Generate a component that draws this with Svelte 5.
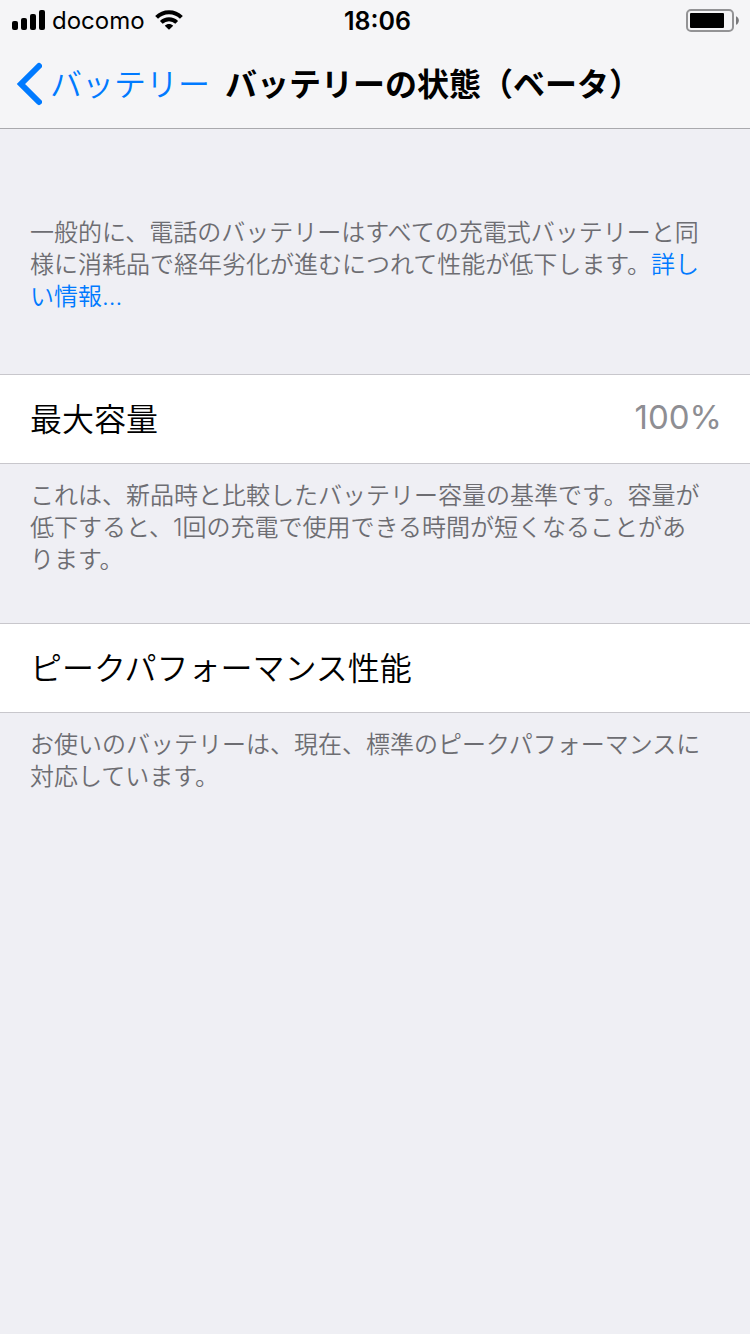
<script>
	let carrier = 'docomo';
	let time = '18:06';
	let charge = 34;

	let groups = [
		{
			label: '最大容量',
			value: '100%',
			note: 'これは、新品時と比較したバッテリー容量の基準です。容量が低下すると、1回の充電で使用できる時間が短くなることがあります。'
		},
		{
			label: 'ピークパフォーマンス性能',
			value: '',
			note: 'お使いのバッテリーは、現在、標準のピークパフォーマンスに対応しています。'
		}
	];
</script>

<header class="top">
	<div class="status">
		<div class="status__left">
			<svg width="33" height="20" viewBox="0 0 33 20" aria-hidden="true">
				<rect x="0" y="11" width="6" height="9" rx="2" />
				<rect x="9" y="8" width="6" height="12" rx="2" />
				<rect x="18" y="4" width="6" height="16" rx="2" />
				<rect x="27" y="0" width="6" height="20" rx="2" />
			</svg>
			<span class="carrier">{carrier}</span>
			<svg class="wifi" width="28" height="20" viewBox="0 0 28 20" aria-hidden="true">
				<path d="M1.6 7.4C8.5 0.4 19.5 0.4 26.4 7.4" />
				<path d="M6.3 12.4C10.6 8.3 17.4 8.3 21.7 12.4" />
				<path class="solid" d="M9.8 15.7C12 13.5 16 13.5 18.2 15.7L14.6 19.3Q14 19.9 13.4 19.3Z" />
			</svg>
		</div>
		<time>{time}</time>
		<div class="status__right">
			<svg width="53" height="23" viewBox="0 0 53 23" aria-hidden="true">
				<rect x="1" y="1" width="46" height="21" rx="4" fill="none" stroke="#939395" stroke-width="2" />
				<rect x="4" y="4" width={charge} height="15" rx="1" />
				<path d="M50 7.2C53.8 8.4 53.8 14.6 50 15.8Z" fill="#79797b" />
			</svg>
		</div>
	</div>
	<nav>
		<a class="back" href="#battery">
			<svg width="26" height="44" viewBox="0 0 26 44" aria-hidden="true">
				<path d="M23 4L5 22L23 40" />
			</svg>
			<span>バッテリー</span>
		</a>
		<h1>バッテリーの状態（ベータ）</h1>
	</nav>
</header>

<main>
	<p class="intro">一般的に、電話のバッテリーはすべての充電式バッテリーと同様に消耗品で経年劣化が進むにつれて性能が低下します。<a href="#more">詳しい情報...</a></p>

	{#each groups as group}
		<section>
			<div class="row">
				<h2>{group.label}</h2>
				{#if group.value}
					<span class="value">{group.value}</span>
				{/if}
			</div>
			<p class="note">{group.note}</p>
		</section>
	{/each}
</main>

<style>
	:global(body) {
		background-color: #efeff4;
		font-family: Inter, "Noto Sans CJK JP", sans-serif;
		color: #000;
	}

	a {
		color: #007aff;
		text-decoration: none;
	}

	.top {
		background-color: #f5f5f7;
		border-bottom: 1px solid #a9a9ad;
	}

	.status {
		display: grid;
		grid-template-columns: 1fr auto 1fr;
		align-items: center;
		height: 40px;
		padding: 0 11px 0 12px;
		font-size: 24px;
		line-height: 42px;
	}

	.status svg {
		display: block;
	}

	.status__left {
		display: flex;
		align-items: center;
		height: 40px;
	}

	.status__right {
		display: flex;
		justify-content: flex-end;
	}

	.carrier {
		height: 40px;
		margin: 0 10px 0 7px;
	}

	.wifi path {
		fill: none;
		stroke: #000;
		stroke-width: 4;
	}

	.wifi .solid {
		fill: #000;
		stroke: none;
	}

	time {
		height: 40px;
		padding-left: 4px;
		font-size: 25px;
		font-weight: 600;
	}

	nav {
		display: flex;
		align-items: center;
		gap: 15px;
		height: 88px;
		padding: 0 16px;
		font-size: 32px;
		line-height: 42px;
		white-space: nowrap;
	}

	.back {
		display: flex;
		align-items: center;
		gap: 8px;
		font-weight: 350;
	}

	.back span, h1 {
		padding-top: 2px;
	}

	.back path {
		fill: none;
		stroke: currentColor;
		stroke-width: 6;
		stroke-linecap: round;
		stroke-linejoin: miter;
	}

	h1 {
		margin: 0;
		font-size: 32px;
		font-weight: 700;
	}

	.intro, .note {
		margin: 0;
		font-size: 24px;
		font-weight: 350;
		line-height: 32px;
		color: #6d6d72;
	}

	.intro {
		padding: 88px 44px 61px 30px;
	}

	.note {
		padding: 16px 44px 47px 30px;
	}

	.row {
		display: flex;
		justify-content: space-between;
		align-items: center;
		box-sizing: border-box;
		height: 90px;
		padding: 0 28px 4px 30px;
		background-color: #fff;
		border-top: 1px solid #c8c7cc;
		border-bottom: 1px solid #c8c7cc;
	}

	h2 {
		margin: 0;
		font-size: 32px;
		font-weight: 350;
	}

	.value {
		font-size: 33px;
		color: #8e8e93;
	}
</style>
